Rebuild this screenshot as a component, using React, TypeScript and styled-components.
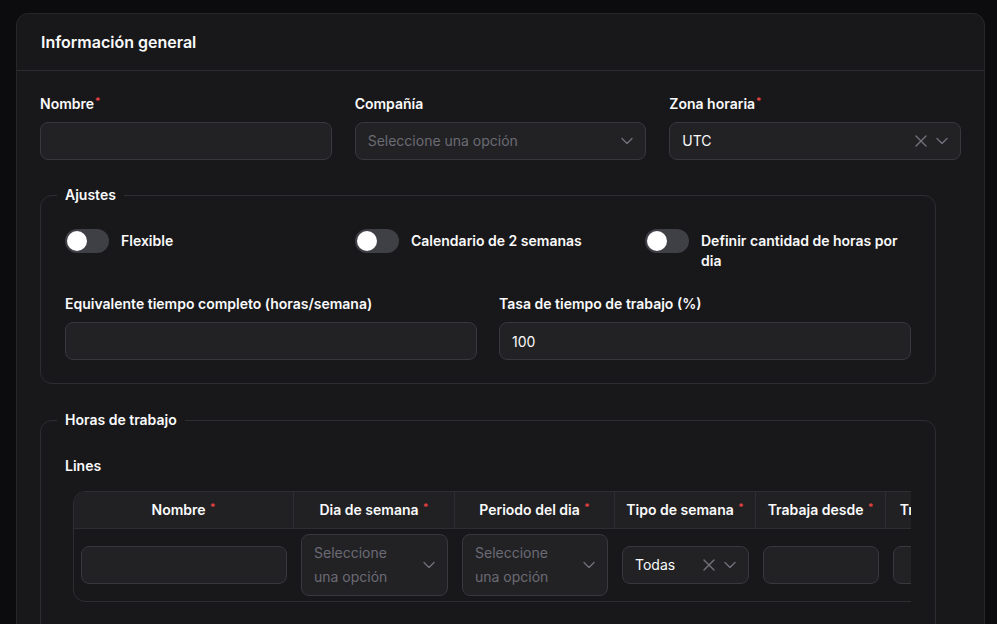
import styled, { createGlobalStyle } from "styled-components"
import { ChevronDown, X } from "lucide-react"

const GlobalStyle = createGlobalStyle`
    * { box-sizing: border-box; }
    body {
        margin: 0;
        background: #0c0c0e;
        color: #fafafa;
        font-family: Inter, "Noto Sans", sans-serif;
        font-size: 14px;
    }
`

const toggles = [
    { id: "flexible", label: "Flexible" },
    { id: "twoWeeks", label: "Calendario de 2 semanas" },
    { id: "hoursPerDay", label: "Definir cantidad de horas por dia" },
]

const columns = [
    { title: "Nombre", width: 220 },
    { title: "Dia de semana", width: 161 },
    { title: "Periodo del dia", width: 160 },
    { title: "Tipo de semana", width: 141 },
    { title: "Trabaja desde", width: 130 },
    { title: "Trabaja hasta", width: 130 },
    { title: "Horas", width: 110 },
]

function Select({ value, placeholder, clearable }: { value?: string, placeholder?: string, clearable?: boolean }) {
    return (
        <SelectBox>
            <SelectValue isPlaceholder={!value}>{value || placeholder}</SelectValue>
            <SelectIcons>
                {clearable && <X size={20} strokeWidth={1.6} />}
                <ChevronDown size={20} strokeWidth={1.6} />
            </SelectIcons>
        </SelectBox>
    )
}

function Label({ text, required }: { text: string, required?: boolean }) {
    return <FieldLabel>{text}{required && <Asterisk>*</Asterisk>}</FieldLabel>
}

export default function App() {
    return <>
        <GlobalStyle />
        <Page>
            <Card>
                <CardHeader>Información general</CardHeader>
                <CardBody>
                    <ThreeCols>
                        <Field>
                            <Label text="Nombre" required />
                            <Input />
                        </Field>
                        <Field>
                            <Label text="Compañía" />
                            <Select placeholder="Seleccione una opción" />
                        </Field>
                        <Field>
                            <Label text="Zona horaria" required />
                            <Select value="UTC" clearable />
                        </Field>
                    </ThreeCols>

                    <Group>
                        <Legend>Ajustes</Legend>
                        <GroupContent>
                            <ToggleRow>
                                {toggles.map(t => (
                                    <ToggleItem key={t.id}>
                                        <Switch />
                                        <span>{t.label}</span>
                                    </ToggleItem>
                                ))}
                            </ToggleRow>
                            <TwoCols>
                                <Field>
                                    <Label text="Equivalente tiempo completo (horas/semana)" />
                                    <Input />
                                </Field>
                                <Field>
                                    <Label text="Tasa de tiempo de trabajo (%)" />
                                    <Input value="100" readOnly />
                                </Field>
                            </TwoCols>
                        </GroupContent>
                    </Group>

                    <Group>
                        <Legend>Horas de trabajo</Legend>
                        <LinesTitle>Lines</LinesTitle>
                        <TableScroll>
                            <Table>
                                <colgroup>
                                    {columns.map(c => <col key={c.title} style={{ width: c.width }} />)}
                                </colgroup>
                                <thead>
                                    <tr>
                                        {columns.map(c => (
                                            <Th key={c.title}>{c.title} <Asterisk>*</Asterisk></Th>
                                        ))}
                                    </tr>
                                </thead>
                                <tbody>
                                    <tr>
                                        <Td><Input /></Td>
                                        <Td><Select placeholder="Seleccione una opción" /></Td>
                                        <Td><Select placeholder="Seleccione una opción" /></Td>
                                        <Td><Select value="Todas" clearable /></Td>
                                        <Td><Input /></Td>
                                        <Td><Input /></Td>
                                        <Td><Input /></Td>
                                    </tr>
                                </tbody>
                            </Table>
                        </TableScroll>
                        <AddLine>+ Agregar línea</AddLine>
                    </Group>
                </CardBody>
            </Card>
        </Page>
    </>
}

const Page = styled.div`
    height: 624px;
    overflow: hidden;
    padding: 13px 12px 0 16px;
`

const Card = styled.div`
    background: #18181b;
    border: 1px solid #27272a;
    border-radius: 12px;
    min-height: 760px;
`

const CardHeader = styled.div`
    height: 57px;
    padding: 0 24px;
    display: flex;
    align-items: center;
    border-bottom: 1px solid #2c2c30;
    font-size: 16px;
    font-weight: 600;
`

const CardBody = styled.div`
    padding: 23px 23px;
    display: flex;
    flex-direction: column;
    gap: 25px;
`

const ThreeCols = styled.div`
    display: grid;
    grid-template-columns: repeat(3, 1fr);
    gap: 23px;
`

const TwoCols = styled.div`
    display: grid;
    grid-template-columns: repeat(2, 1fr);
    gap: 22px;
`

const Field = styled.div`
    display: flex;
    flex-direction: column;
    gap: 8px;
`

const FieldLabel = styled.label`
    font-size: 14px;
    font-weight: 600;
    line-height: 20px;
    color: #fafafa;
`

const Asterisk = styled.sup`
    color: #ef4444;
    font-size: 10px;
    font-weight: 600;
    vertical-align: top;
    position: relative;
    top: -3px;
    margin-left: 1px;
`

const Input = styled.input`
    width: 100%;
    height: 38px;
    padding: 0 12px;
    background: #222225;
    border: 1px solid #38383d;
    border-radius: 8px;
    color: #fafafa;
    font-family: inherit;
    font-size: 14px;
    outline: none;
`

const SelectBox = styled.div`
    display: flex;
    align-items: center;
    gap: 6px;
    min-height: 38px;
    padding: 6px 8px 6px 12px;
    background: #222225;
    border: 1px solid #38383d;
    border-radius: 8px;
    line-height: 24px;
`

const SelectValue = styled.span<{ isPlaceholder: boolean }>`
    flex: 1;
    color: ${p => p.isPlaceholder ? "#6b6b74" : "#fafafa"};
`

const SelectIcons = styled.span`
    display: flex;
    align-items: center;
    gap: 1px;
    color: #71717a;
`

const Group = styled.fieldset`
    margin: 0 25px 0 0;
    min-width: 0;
    padding: 0 24px 23px;
    border: 1px solid #2e2e32;
    border-radius: 12px;

    & + & {
        margin-top: 1px;
    }
`

const Legend = styled.legend`
    margin-left: -8px;
    padding: 0 8px;
    font-size: 14px;
    font-weight: 600;
    line-height: 20px;
`

const GroupContent = styled.div`
    padding-top: 24px;
    display: flex;
    flex-direction: column;
    gap: 23px;
`

const ToggleRow = styled.div`
    display: grid;
    grid-template-columns: repeat(3, 1fr);
    gap: 24px;
`

const ToggleItem = styled.label`
    display: flex;
    align-items: flex-start;
    gap: 12px;
    font-size: 14px;
    font-weight: 600;
    line-height: 20px;

    & > span {
        padding-top: 2px;
    }
`

const Switch = styled.span`
    flex: none;
    position: relative;
    width: 44px;
    height: 24px;
    border-radius: 12px;
    background: #3f3f46;

    &::after {
        content: "";
        position: absolute;
        top: 2px;
        left: 2px;
        width: 20px;
        height: 20px;
        border-radius: 50%;
        background: #ffffff;
    }
`

const LinesTitle = styled.div`
    padding-top: 26px;
    font-size: 14px;
    font-weight: 600;
    line-height: 20px;
`

const TableScroll = styled.div`
    margin: 15px 0 0 8px;
    overflow-x: auto;
    scrollbar-width: none;
`

const Table = styled.table`
    table-layout: fixed;
    width: 1052px;
    border-collapse: separate;
    border-spacing: 0;
    border: 1px solid #2e2e32;
    border-radius: 12px;
    overflow: hidden;
`

const Th = styled.th`
    padding: 8px;
    background: #212124;
    border-bottom: 1px solid #2e2e32;
    border-right: 1px solid #2e2e32;
    font-size: 14px;
    font-weight: 600;
    line-height: 20px;
    text-align: center;
    white-space: nowrap;

    &:last-child {
        border-right: 0;
    }
`

const Td = styled.td`
    padding: 5px 7px;
    vertical-align: middle;
`

const AddLine = styled.button`
    margin: 24px 0 0 8px;
    height: 36px;
    padding: 0 14px;
    background: #27272a;
    border: 1px solid #38383d;
    border-radius: 8px;
    color: #fafafa;
    font-family: inherit;
    font-size: 14px;
    font-weight: 600;
`
